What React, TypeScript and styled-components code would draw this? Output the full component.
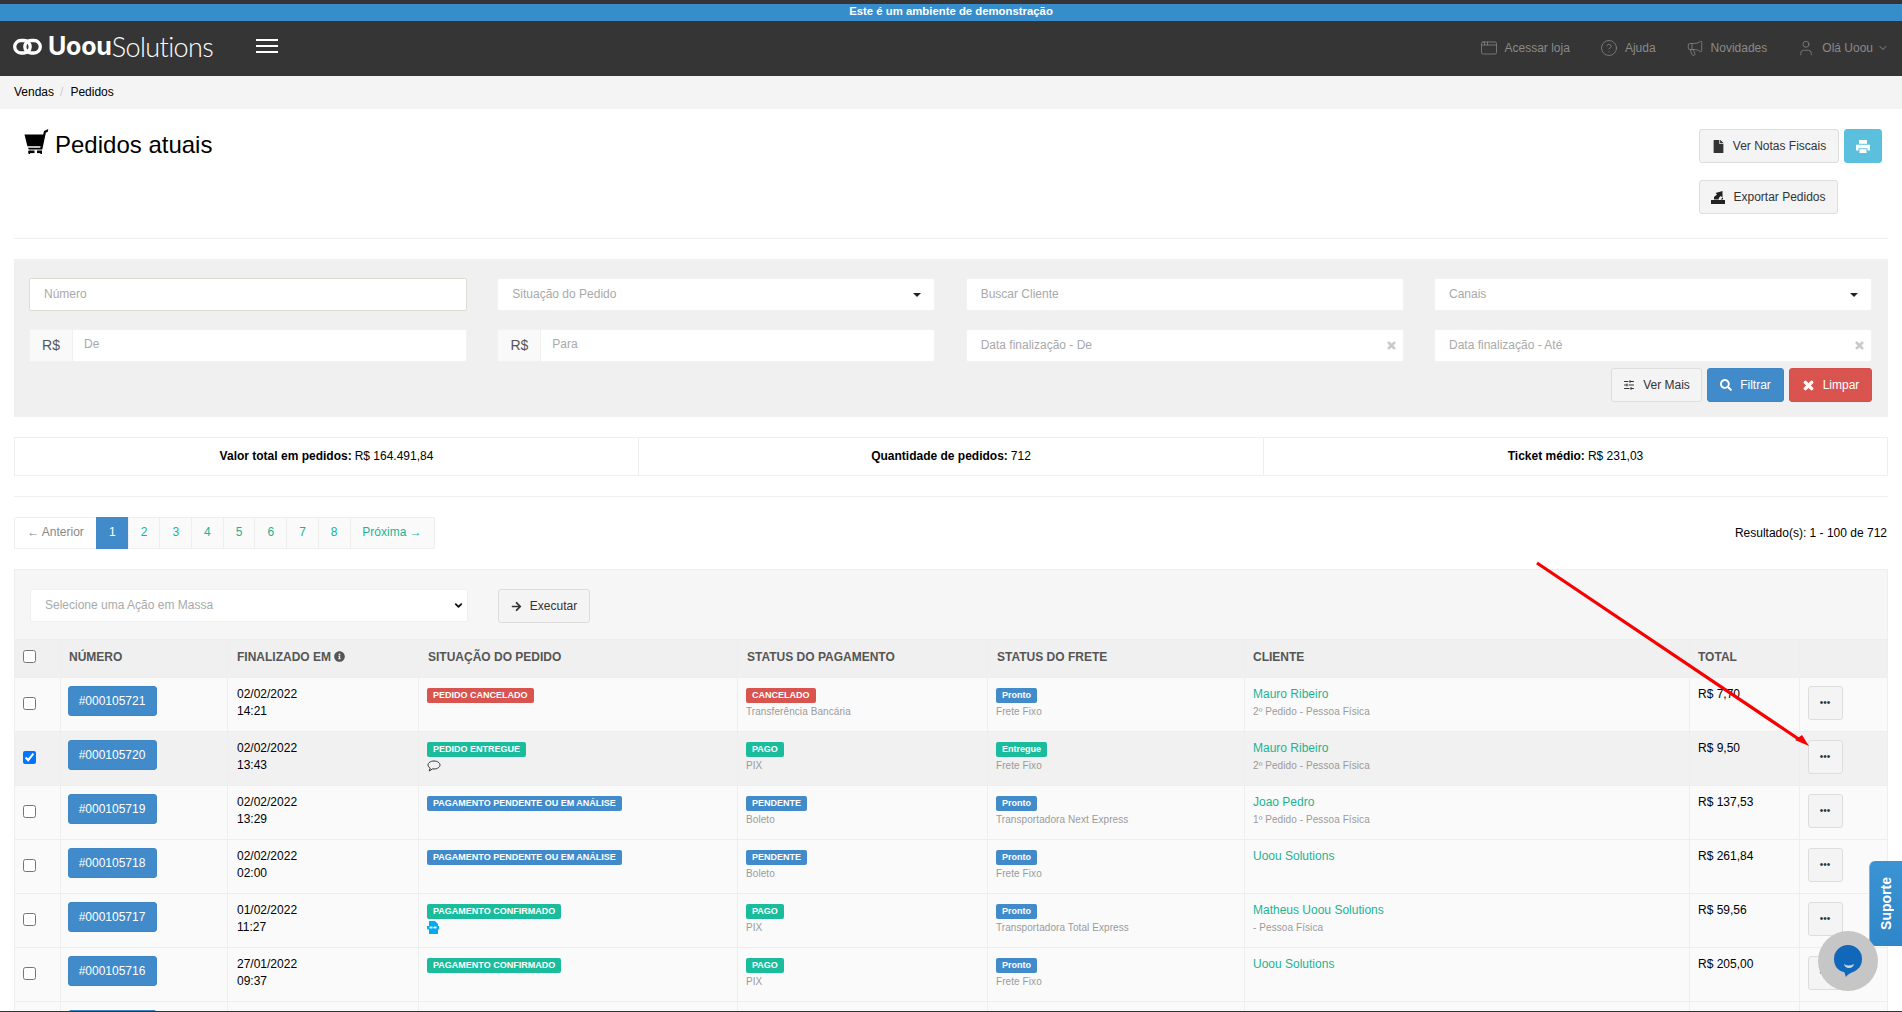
import React from "react";
import styled, { createGlobalStyle } from "styled-components";
import { FaFile, FaSearch, FaTimes, FaArrowRight, FaInfoCircle } from "react-icons/fa";
import { AppWindow, CircleHelp, Megaphone, User, ChevronDown, SlidersHorizontal } from "lucide-react";

const Global = createGlobalStyle`
  html, body { margin: 0; padding: 0; height: 1012px; overflow: hidden; background: #fff; }
  body { font-family: "Liberation Sans", Arial, sans-serif; font-size: 12px; color: #000; }
  * { box-sizing: border-box; }
`;

const Page = styled.div`
  width: 1902px;
  height: 1012px;
  overflow: hidden;
  position: relative;
`;
const TopStrip = styled.div`
  height: 4px;
  background: #353535;
`;
const DemoBar = styled.div`
  height: 17px;
  background: #368dc9;
  color: #fff;
  font-weight: 700;
  font-size: 11.35px;
  text-align: center;
  line-height: 15px;
`;
const Header = styled.header`
  height: 55px;
  background: #353535;
  display: flex;
  align-items: center;
  padding: 0 13px 3px 12px;
`;
const Logo = styled.div`
  display: flex;
  align-items: center;
  color: #fff;
  width: 244px;
  font-size: 25px;
  line-height: 1;
  letter-spacing: -0.4px;
  margin-top: -2px;
`;
const LogoBold = styled.span`
  font-family: "Inter", sans-serif;
  font-weight: 700;
  margin-left: 5px;
  letter-spacing: -0.2px;
`;
const LogoLight = styled.span`
  font-family: "Lato", sans-serif;
  font-weight: 300;
  font-size: 27px;
  letter-spacing: -0.6px;
`;
const Burger = styled.div`
  width: 22px;
  height: 14px;
  margin-top: -2px;
  border-top: 2px solid #fff;
  border-bottom: 2px solid #fff;
  display: flex;
  align-items: center;
  &::before { content: ""; display: block; width: 100%; height: 2px; background: #fff; }
`;
const NavRight = styled.nav`
  margin-left: auto;
  margin-top: 2px;
  display: flex;
  align-items: center;
  color: #8a8a8a;
`;
const NavItem = styled.span<{ $gap: number }>`
  display: flex;
  align-items: center;
  gap: 7px;
  margin-right: ${(p) => p.$gap}px;
  svg { flex: none; }
`;
const NavChevron = styled(ChevronDown)`
  margin-left: -3px;
`;
const Crumbs = styled.div`
  height: 33px;
  background: #f4f4f4;
  padding: 0 14px 1px;
  display: flex;
  align-items: center;
  font-size: 12px;
`;
const CrumbSep = styled.span`
  color: #ccc;
  margin: 0 7px 0 6px;
`;
const Main = styled.main`
  padding: 0 14px;
`;
const TitleRow = styled.div`
  height: 130px;
  border-bottom: 1px solid #eee;
  display: flex;
  justify-content: space-between;
  padding: 20px 6px 0 10px;
`;
const Title = styled.h1`
  margin: 0;
  display: flex;
  align-items: flex-start;
  gap: 6px;
  font-size: 24px;
  font-weight: 400;
  line-height: 32px;
  height: 32px;
`;
const TitleActions = styled.div`
  width: 183px;
  display: flex;
  flex-wrap: wrap;
  align-content: flex-start;
  column-gap: 5px;
  row-gap: 17px;
`;
const Btn = styled.button<{ $w?: number; $bg?: string; $fg?: string; $bd?: string; $h?: number }>`
  height: ${(p) => p.$h ?? 34}px;
  width: ${(p) => (p.$w ? `${p.$w}px` : "auto")};
  background: ${(p) => p.$bg ?? "#f4f4f4"};
  color: ${(p) => p.$fg ?? "#333"};
  border: 1px solid ${(p) => p.$bd ?? "#ddd"};
  border-radius: 3px;
  font: inherit;
  font-size: 12px;
  padding: 0;
  display: inline-flex;
  align-items: center;
  justify-content: center;
  gap: 8px;
  flex: none;
`;
const BoldX = styled(FaTimes).attrs({ stroke: "currentColor", strokeWidth: 40 })``;
const FilterPanel = styled.section`
  margin-top: 20px;
  height: 158px;
  background: #f0f0f0;
  padding: 19px 16px 0 15px;
`;
const FilterGrid = styled.div`
  display: grid;
  grid-template-columns: repeat(4, 438px);
  column-gap: 30.33px;
  row-gap: 18px;
`;
const Field = styled.div<{ $focus?: boolean }>`
  height: 33px;
  background: #fff;
  border: 1px solid ${(p) => (p.$focus ? "#dcdcd0" : "#f2f2f2")};
  border-radius: 2px;
  color: #a9a9a9;
  display: flex;
  align-items: center;
  padding: 0 14px 2px;
  justify-content: space-between;
  line-height: 28px;
`;
const MoneyField = styled(Field)`
  padding: 0;
  justify-content: flex-start;
`;
const Addon = styled.span`
  width: 43px;
  height: 100%;
  background: #f9f9f9;
  border-right: 1px solid #f0f0f0;
  color: #555;
  font-size: 14px;
  display: flex;
  align-items: center;
  justify-content: center;
  padding-bottom: 1px;
`;
const AddonText = styled.span`
  padding-left: 11px;
  margin-top: -4px;
`;
const Caret = styled.i`
  width: 0;
  height: 0;
  border-left: 4px solid transparent;
  border-right: 4px solid transparent;
  border-top: 4px solid #222;
  margin: 2px -1px 0 0;
`;
const ClearX = styled(BoldX)`
  color: #c8c8c8;
  font-size: 11px;
  margin: 2px -8px 0 0;
`;
const FilterActions = styled.div`
  display: flex;
  justify-content: flex-end;
  gap: 5px;
  margin-top: 6px;
`;
const Stats = styled.div`
  margin-top: 20px;
  height: 39px;
  display: grid;
  grid-template-columns: 624px 625px 1fr;
  border: 1px solid #eee;
`;
const Stat = styled.div`
  display: flex;
  align-items: center;
  justify-content: center;
  gap: 3px;
  padding-bottom: 1px;
  border-right: 1px solid #eee;
  &:last-child { border-right: 0; }
`;
const Divider = styled.hr`
  border: 0;
  border-top: 1px solid #eee;
  margin: 20px 0;
`;
const PagerRow = styled.div`
  display: flex;
  justify-content: space-between;
  align-items: center;
  height: 32px;
  padding-right: 1px;
`;
const Pager = styled.div`
  display: flex;
  height: 32px;
`;
const PageLink = styled.span<{ $w: number; $active?: boolean; $muted?: boolean }>`
  width: ${(p) => p.$w}px;
  display: flex;
  align-items: center;
  justify-content: center;
  padding-bottom: 2px;
  background: ${(p) => (p.$active ? "#428bca" : p.$muted ? "#fff" : "#fafafa")};
  color: ${(p) => (p.$active ? "#fff" : p.$muted ? "#888" : "#1ab394")};
  border: 1px solid ${(p) => (p.$active ? "#428bca" : "#eee")};
  margin-left: -1px;
  &:first-child { margin-left: 0; border-radius: 2px 0 0 2px; }
  &:last-child { border-radius: 0 2px 2px 0; }
`;
const ActionPanel = styled.section`
  margin-top: 20px;
  background: #f6f6f6;
  border: 1px solid #eee;
  border-bottom: 0;
`;
const ActionBar = styled.div`
  height: 69px;
  display: flex;
  align-items: flex-start;
  padding: 19px 0 0 15px;
  gap: 30px;
`;
const MassSelect = styled.div`
  width: 438px;
  height: 33px;
  background: #fff;
  border: 1px solid #f0f0f0;
  border-radius: 2px;
  color: #a9a9a9;
  display: flex;
  align-items: center;
  justify-content: space-between;
  padding: 0 3px 2px 14px;
  svg { color: #111; margin-top: 2px; }
`;
const Table = styled.table`
  width: 1872px;
  border-collapse: collapse;
  table-layout: fixed;
  th, td { border: 1px solid #eee; }
  tr > :first-child { border-left: 0; }
  tr > :last-child { border-right: 0; }
  th:nth-child(2), th:nth-child(7), th:nth-child(8),
  td:nth-child(7), td:nth-child(8) { padding-left: 8.5px; }
`;
const Th = styled.th`
  height: 38px;
  background: #f0f0f0;
  color: #555;
  text-align: left;
  font-size: 12px;
  font-weight: 700;
  padding: 0 8px 3px 9.5px;
  text-transform: uppercase;
  white-space: nowrap;
  svg { vertical-align: -1px; margin-left: 3px; }
`;
const CheckTh = styled(Th)`
  padding: 0 0 4px 8px;
`;
const Tr = styled.tr<{ $checked?: boolean }>`
  background: ${(p) => (p.$checked ? "#f1f1f1" : "#fafafa")};
`;
const Td = styled.td`
  height: 54px;
  padding: 8px 9px 0 9.5px;
  vertical-align: top;
  line-height: 17px;
  overflow: hidden;
  white-space: nowrap;
`;
const CheckTd = styled(Td)`
  padding: 0 0 2px 8px;
  vertical-align: middle;
`;
const CheckBox = styled.input.attrs({ type: "checkbox" })`
  width: 13px;
  height: 13px;
  margin: 0;
  display: block;
  accent-color: #0075ff;
`;
const OrderBtn = styled(Btn)`
  width: 89px;
  height: 30px;
  background: #428bca;
  border-color: #3f86c4;
  color: #fff;
`;
const NumTd = styled(Td)`
  padding-left: 7px;
`;
const Badge = styled.span<{ $c: "red" | "green" | "blue" }>`
  display: inline-block;
  height: 15px;
  line-height: 14px;
  padding: 0 6px;
  margin-left: -1px;
  border-radius: 2px;
  font-size: 9px;
  font-weight: 700;
  color: #fff;
  vertical-align: top;
  margin-top: 2px;
  background: ${(p) => ({ red: "#d9534f", green: "#1abc9c", blue: "#428bca" }[p.$c])};
`;
const Sub = styled.div`
  font-size: 10px;
  line-height: 12px;
  margin-top: 3px;
  color: #9a9a9a;
  letter-spacing: 0.08px;
`;
const StatusSub = styled(Sub)`
  margin-left: -1px;
`;
const NoteIcon = styled.div`
  margin: 2px 0 0 -1px;
  height: 13px;
  display: flex;
  align-items: center;
`;
const ClientLink = styled.span`
  color: #1ab394;
`;
const More = styled(Btn)`
  width: 35px;
  height: 34px;
  font-size: 10px;
  line-height: 1;
`;
const MoreTd = styled(Td)`
  padding-left: 8px;
`;
const ArrowOverlay = styled.svg`
  position: absolute;
  left: 1530px;
  top: 555px;
  pointer-events: none;
`;
const SupportTab = styled.div`
  position: absolute;
  right: 0;
  top: 861px;
  width: 33px;
  height: 85px;
  background: linear-gradient(180deg, #3a93d3, #2f86c8);
  border-radius: 6px 0 0 6px;
  border-left: 1px solid #7fb3da;
  color: #fff;
  font-size: 14px;
  font-weight: 700;
  display: flex;
  align-items: center;
  justify-content: center;
`;
const SupportText = styled.span`
  writing-mode: vertical-rl;
  transform: rotate(180deg);
`;
const ChatBubble = styled.div`
  position: absolute;
  left: 1818px;
  top: 931px;
  width: 60px;
  height: 60px;
  border-radius: 50%;
  background: #c6c6c6;
  display: flex;
  align-items: center;
  justify-content: center;
`;
const BottomLine = styled.div`
  position: absolute;
  left: 0;
  right: 0;
  bottom: 0;
  height: 1px;
  background: #333;
`;

const CartIcon = () => (
  <svg width="25" height="25" viewBox="0 0 25 25">
    <path d="M24.3 0l-.7 3-1.7.4-3.6 17H4.8L4 18.8h12.3l.3-1.5H3.4L.5 5.5h18.7l.8-3.5z" fill="#000" />
    <rect x="4.5" y="21.5" width="6" height="2.6" fill="#000" />
    <rect x="13" y="21.5" width="5" height="2.6" fill="#000" />
    <rect x="4.5" y="22" width="1.6" height="3" fill="#000" />
    <rect x="16.4" y="22" width="1.6" height="3" fill="#000" />
  </svg>
);

const ExportIcon = () => (
  <svg width="14" height="14" viewBox="0 0 14 14">
    <rect x="0" y="10" width="14" height="4" fill="#222" />
    <path d="M3 9.500V7l3-2.600L4.600 3l6.900-2v6.600L9.800 6 7.800 8v1.500z" fill="#222" />
    <path d="M9.500 9.500l2.500-2.200v2.200z" fill="#222" />
  </svg>
);

const PrintIcon = () => (
  <svg width="14" height="13" viewBox="0 0 14 13" fill="#fff">
    <rect x="3" y="0" width="8" height="3.800" />
    <path d="M0 4.800h14V10.500h-2.500V8.200h-9v2.300H0z" />
    <rect x="3.500" y="9.200" width="7" height="3.800" />
  </svg>
);

const LogoMark = () => (
  <svg width="31" height="19" viewBox="0 0 31 19" fill="none">
    <rect x="2.700" y="3.500" width="15.500" height="12.500" rx="6.250" stroke="#fff" strokeWidth="3.300" />
    <rect x="12.800" y="3.500" width="15.500" height="12.500" rx="6.250" stroke="#353535" strokeWidth="5.500" strokeDasharray="20 40" />
    <rect x="12.800" y="3.500" width="15.500" height="12.500" rx="6.250" stroke="#fff" strokeWidth="3.300" />
  </svg>
);

const NfIcon = () => (
  <svg width="12" height="13" viewBox="0 0 12 13">
    <path d="M2 0h6l3 3v10H2z" fill="#05aaf0" />
    <rect x="0" y="5" width="12" height="3.400" fill="#05aaf0" />
    <rect x="2.500" y="5.600" width="3" height="1.800" fill="#fff" />
    <rect x="6.500" y="5.600" width="3" height="1.800" fill="#fff" />
  </svg>
);

const CommentIcon = () => (
  <svg width="14" height="12" viewBox="0 0 14 12" fill="none">
    <path d="M7 1C3.700 1 1 2.800 1 5c0 1.300.9 2.400 2.200 3.100L2.200 11l3.300-2.100c.5.100 1 .1 1.500.1 3.300 0 6-1.800 6-4S10.300 1 7 1z" stroke="#333" strokeWidth="1" />
  </svg>
);

type Row = {
  id: string; d: string; t: string;
  sit: string; sitC: "red" | "green" | "blue"; note?: "comment" | "nf";
  pay: string; payC: "red" | "green" | "blue"; method: string;
  ship: string; shipC: "green" | "blue"; carrier: string;
  client: string; clientSub?: string; total: string; checked?: boolean;
};

const rows: Row[] = [
  { id: "#000105721", d: "02/02/2022", t: "14:21", sit: "PEDIDO CANCELADO", sitC: "red", pay: "CANCELADO", payC: "red", method: "Transferência Bancária", ship: "Pronto", shipC: "blue", carrier: "Frete Fixo", client: "Mauro Ribeiro", clientSub: "2º Pedido - Pessoa Física", total: "R$ 7,70" },
  { id: "#000105720", d: "02/02/2022", t: "13:43", sit: "PEDIDO ENTREGUE", sitC: "green", note: "comment", pay: "PAGO", payC: "green", method: "PIX", ship: "Entregue", shipC: "green", carrier: "Frete Fixo", client: "Mauro Ribeiro", clientSub: "2º Pedido - Pessoa Física", total: "R$ 9,50", checked: true },
  { id: "#000105719", d: "02/02/2022", t: "13:29", sit: "PAGAMENTO PENDENTE OU EM ANÁLISE", sitC: "blue", pay: "PENDENTE", payC: "blue", method: "Boleto", ship: "Pronto", shipC: "blue", carrier: "Transportadora Next Express", client: "Joao Pedro", clientSub: "1º Pedido - Pessoa Física", total: "R$ 137,53" },
  { id: "#000105718", d: "02/02/2022", t: "02:00", sit: "PAGAMENTO PENDENTE OU EM ANÁLISE", sitC: "blue", pay: "PENDENTE", payC: "blue", method: "Boleto", ship: "Pronto", shipC: "blue", carrier: "Frete Fixo", client: "Uoou Solutions", total: "R$ 261,84" },
  { id: "#000105717", d: "01/02/2022", t: "11:27", sit: "PAGAMENTO CONFIRMADO", sitC: "green", note: "nf", pay: "PAGO", payC: "green", method: "PIX", ship: "Pronto", shipC: "blue", carrier: "Transportadora Total Express", client: "Matheus Uoou Solutions", clientSub: "- Pessoa Física", total: "R$ 59,56" },
  { id: "#000105716", d: "27/01/2022", t: "09:37", sit: "PAGAMENTO CONFIRMADO", sitC: "green", pay: "PAGO", payC: "green", method: "PIX", ship: "Pronto", shipC: "blue", carrier: "Frete Fixo", client: "Uoou Solutions", total: "R$ 205,00" },
];

export default function App() {
  return (
    <Page>
      <Global />
      <TopStrip />
      <DemoBar>Este é um ambiente de demonstração</DemoBar>
      <Header>
        <Logo>
          <LogoMark />
          <LogoBold>Uoou</LogoBold>
          <LogoLight>Solutions</LogoLight>
        </Logo>
        <Burger />
        <NavRight>
          <NavItem $gap={30}><AppWindow size={18} strokeWidth={1} />Acessar loja</NavItem>
          <NavItem $gap={30}><CircleHelp size={18} strokeWidth={1} />Ajuda</NavItem>
          <NavItem $gap={30}><Megaphone size={18} strokeWidth={1} />Novidades</NavItem>
          <NavItem $gap={0}><User size={18} strokeWidth={1} />Olá Uoou<NavChevron size={12} /></NavItem>
        </NavRight>
      </Header>
      <Crumbs>Vendas<CrumbSep>/</CrumbSep>Pedidos</Crumbs>
      <Main>
        <TitleRow>
          <Title><CartIcon />Pedidos atuais</Title>
          <TitleActions>
            <Btn $w={140}><FaFile size={13} />Ver Notas Fiscais</Btn>
            <Btn $w={38} $bg="#5bc0de" $bd="#5bc0de" $fg="#fff"><PrintIcon /></Btn>
            <Btn $w={139}><ExportIcon />Exportar Pedidos</Btn>
          </TitleActions>
        </TitleRow>
        <FilterPanel>
          <FilterGrid>
            <Field $focus>Número</Field>
            <Field>Situação do Pedido<Caret /></Field>
            <Field>Buscar Cliente</Field>
            <Field>Canais<Caret /></Field>
            <MoneyField><Addon>R$</Addon><AddonText>De</AddonText></MoneyField>
            <MoneyField><Addon>R$</Addon><AddonText>Para</AddonText></MoneyField>
            <Field>Data finalização - De<ClearX /></Field>
            <Field>Data finalização - Até<ClearX /></Field>
          </FilterGrid>
          <FilterActions>
            <Btn $w={91}><SlidersHorizontal size={12} />Ver Mais</Btn>
            <Btn $w={77} $bg="#428bca" $bd="#3f86c4" $fg="#fff"><FaSearch size={12} />Filtrar</Btn>
            <Btn $w={83} $bg="#d9534f" $bd="#d4504c" $fg="#fff"><BoldX size={13} />Limpar</Btn>
          </FilterActions>
        </FilterPanel>
        <Stats>
          <Stat><b>Valor total em pedidos:</b> R$ 164.491,84</Stat>
          <Stat><b>Quantidade de pedidos:</b> 712</Stat>
          <Stat><b>Ticket médio:</b> R$ 231,03</Stat>
        </Stats>
        <Divider />
        <PagerRow>
          <Pager>
            <PageLink $w={83} $muted>← Anterior</PageLink>
            <PageLink $w={32.7} $active>1</PageLink>
            {["2", "3", "4", "5", "6", "7", "8"].map((n) => (
              <PageLink key={n} $w={32.7}>{n}</PageLink>
            ))}
            <PageLink $w={85}>Próxima →</PageLink>
          </Pager>
          <span>Resultado(s): 1 - 100 de 712</span>
        </PagerRow>
        <ActionPanel>
          <ActionBar>
            <MassSelect>Selecione uma Ação em Massa<ChevronDown size={11} strokeWidth={4} /></MassSelect>
            <Btn $w={92}><FaArrowRight size={11} />Executar</Btn>
          </ActionBar>
          <Table>
            <colgroup>
              <col width={45} /><col width={167} /><col width={191} /><col width={319} />
              <col width={250} /><col width={257} /><col width={445} /><col width={110} /><col width={88} />
            </colgroup>
            <thead>
              <tr>
                <CheckTh><CheckBox readOnly /></CheckTh>
                <Th>Número</Th>
                <Th>Finalizado em<FaInfoCircle size={11} /></Th>
                <Th>Situação do Pedido</Th>
                <Th>Status do Pagamento</Th>
                <Th>Status do Frete</Th>
                <Th>Cliente</Th>
                <Th>Total</Th>
                <Th />
              </tr>
            </thead>
            <tbody>
              {rows.map((r) => (
                <Tr key={r.id} $checked={r.checked}>
                  <CheckTd><CheckBox checked={!!r.checked} readOnly /></CheckTd>
                  <NumTd><OrderBtn>{r.id}</OrderBtn></NumTd>
                  <Td>{r.d}<br />{r.t}</Td>
                  <Td>
                    <Badge $c={r.sitC}>{r.sit}</Badge>
                    {r.note === "comment" && <NoteIcon><CommentIcon /></NoteIcon>}
                    {r.note === "nf" && <NoteIcon><NfIcon /></NoteIcon>}
                  </Td>
                  <Td><Badge $c={r.payC}>{r.pay}</Badge><StatusSub>{r.method}</StatusSub></Td>
                  <Td><Badge $c={r.shipC}>{r.ship}</Badge><StatusSub>{r.carrier}</StatusSub></Td>
                  <Td><ClientLink>{r.client}</ClientLink>{r.clientSub && <Sub>{r.clientSub}</Sub>}</Td>
                  <Td>{r.total}</Td>
                  <MoreTd><More>•••</More></MoreTd>
                </Tr>
              ))}
              <Tr>
                <CheckTd /><NumTd><OrderBtn /></NumTd><Td /><Td /><Td /><Td /><Td /><Td /><MoreTd />
              </Tr>
            </tbody>
          </Table>
        </ActionPanel>
      </Main>
      <ArrowOverlay width="290" height="200" viewBox="0 0 290 200">
        <line x1="7" y1="8" x2="270" y2="185" stroke="#f80000" strokeWidth="3.200" />
        <path d="M279 191L265 185L272 180z" fill="#f80000" />
      </ArrowOverlay>
      <SupportTab><SupportText>Suporte</SupportText></SupportTab>
      <ChatBubble>
        <svg width="30" height="34" viewBox="0 0 30 34">
          <path d="M15 1a14 14 0 0 1 14 14c0 7-4 11-9 13-3 1-6 3-7 5-1-2-1-4-2-5C5 27 1 22 1 15A14 14 0 0 1 15 1z" fill="#1168bb" />
          <path d="M11 20q4.500 3 10 0q-1 4-5 4q-4 0-5-4z" fill="#d6d6d6" />
        </svg>
      </ChatBubble>
      <BottomLine />
    </Page>
  );
}
